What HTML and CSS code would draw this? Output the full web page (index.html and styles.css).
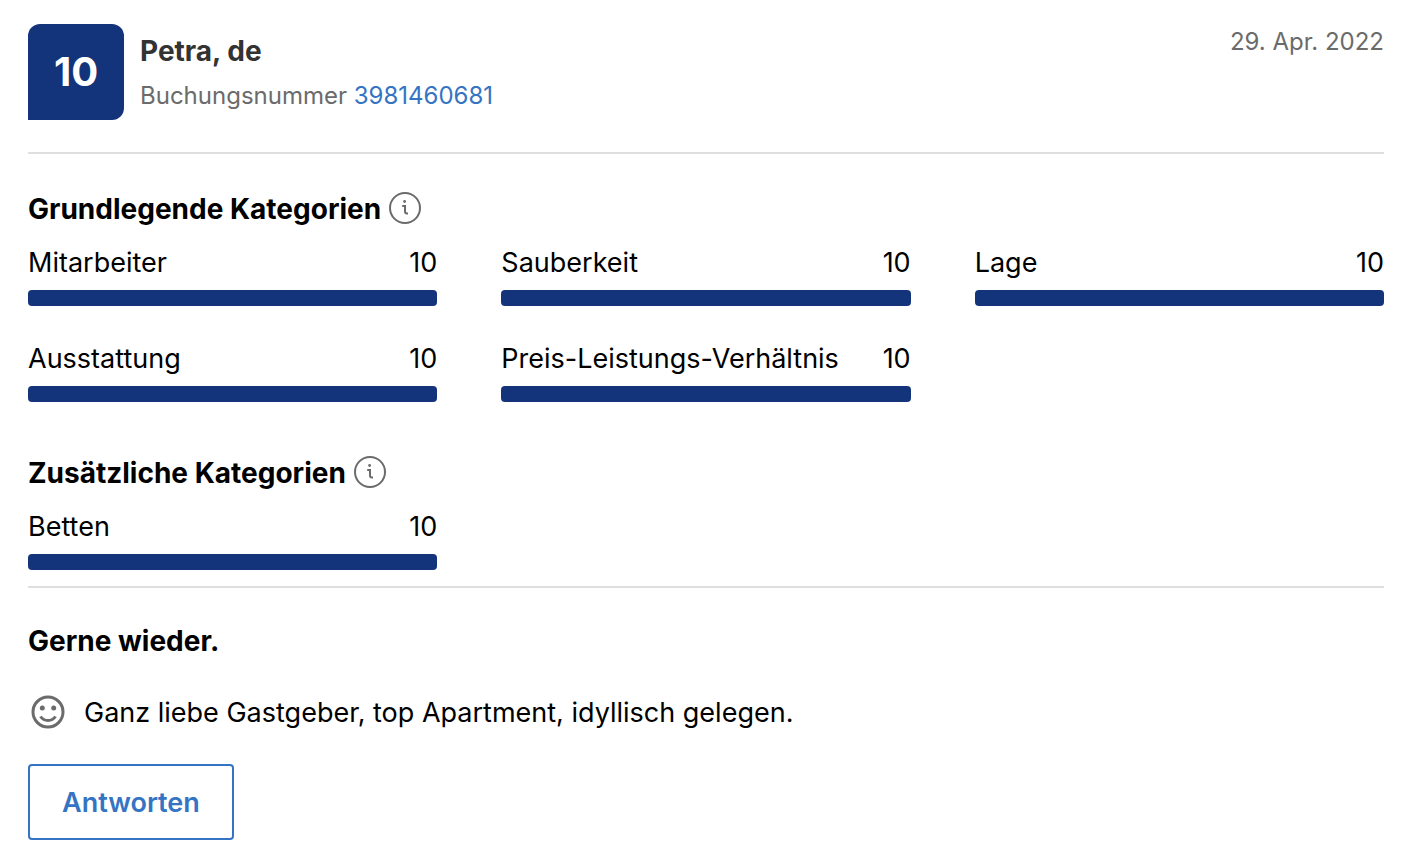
FILE: index.html
```html
<!DOCTYPE html>
<html lang="de">
<head>
	<meta charset="utf-8">
	<meta name="viewport" content="width=device-width, initial-scale=1">
	<title>Gästebewertung</title>
	<link rel="stylesheet" href="styles.css">
</head>
<body>

	<main class="review">

		<header class="review-header">
			<div class="score">10</div>
			<div class="guest">
				<h1 class="guest-name">Petra, de</h1>
				<p class="booking">Buchungsnummer <a href="#">3981460681</a></p>
			</div>
			<time class="date" datetime="2022-04-29">29. Apr. 2022</time>
		</header>

		<section class="ratings">
			<h2 class="title">Grundlegende Kategorien
				<svg class="info" viewBox="0 -4 32 40" aria-hidden="true">
					<circle cx="16" cy="16" r="15"/>
					<path d="M13.2 14h2.8v5.4q0 2 2 2h1"/>
					<circle class="dot" cx="15.6" cy="9.5" r="1.4"/>
				</svg>
			</h2>
			<div class="grid">
				<div class="category">
					<span>Mitarbeiter</span><span>10</span>
					<div class="bar"><div class="fill" style="width: 100%"></div></div>
				</div>
				<div class="category">
					<span>Sauberkeit</span><span>10</span>
					<div class="bar"><div class="fill" style="width: 100%"></div></div>
				</div>
				<div class="category">
					<span>Lage</span><span>10</span>
					<div class="bar"><div class="fill" style="width: 100%"></div></div>
				</div>
				<div class="category">
					<span>Ausstattung</span><span>10</span>
					<div class="bar"><div class="fill" style="width: 100%"></div></div>
				</div>
				<div class="category">
					<span>Preis-Leistungs-Verhältnis</span><span>10</span>
					<div class="bar"><div class="fill" style="width: 100%"></div></div>
				</div>
			</div>

			<h2 class="title">Zusätzliche Kategorien
				<svg class="info" viewBox="0 -4 32 40" aria-hidden="true">
					<circle cx="16" cy="16" r="15"/>
					<path d="M13.2 14h2.8v5.4q0 2 2 2h1"/>
					<circle class="dot" cx="15.6" cy="9.5" r="1.4"/>
				</svg>
			</h2>
			<div class="grid">
				<div class="category">
					<span>Betten</span><span>10</span>
					<div class="bar"><div class="fill" style="width: 100%"></div></div>
				</div>
			</div>
		</section>

		<section class="comment">
			<h2 class="title">Gerne wieder.</h2>
			<p class="text">
				<svg class="smile" viewBox="0 0 40 40" aria-hidden="true">
					<circle cx="20" cy="20" r="15"/>
					<path d="M12.5 24.5q2.8 4 7.5 4t7.5-4"/>
					<circle class="dot" cx="14.3" cy="16" r="2.5"/>
					<circle class="dot" cx="25.7" cy="16" r="2.5"/>
				</svg>
				Ganz liebe Gastgeber, top Apartment, idyllisch gelegen.
			</p>
			<button class="reply" type="button">Antworten</button>
		</section>

	</main>

</body>
</html>
```
FILE: styles.css
```css
body {
	margin: 0;
	background: #fff;
	color: #000;
	font-family: Inter, "Liberation Sans", sans-serif;
	font-size: 27px;
	line-height: 42px;
}

h1, h2, p {
	margin: 0;
}

.review {
	padding: 24px 32px 24px 28px;
}

/* header */

.review-header {
	display: flex;
	gap: 16px;
	padding-bottom: 32px;
	border-bottom: 2px solid #dfdfdf;
}

.score {
	width: 96px;
	height: 96px;
	border-radius: 12px 12px 12px 0;
	background: #13337a;
	color: #fff;
	font-size: 40px;
	font-weight: 700;
	line-height: 96px;
	text-align: center;
}

.guest {
	flex: 1;
	padding-top: 6px;
}

.guest-name {
	color: #333;
	font-size: 28px;
	font-weight: 700;
}

.booking {
	margin-top: 4px;
	color: #6b6b6b;
	font-size: 24px;
	line-height: 40px;
}

.booking a {
	color: #3574c3;
	text-decoration: none;
}

.date {
	color: #6b6b6b;
	font-size: 24px;
	line-height: 36px;
}

/* categories */

.ratings {
	padding: 34px 0 16px;
	border-bottom: 2px solid #dfdfdf;
}

.title {
	display: flex;
	align-items: flex-start;
	gap: 8px;
	font-size: 28px;
	font-weight: 700;
}

.info {
	width: 32px;
	height: 40px;
	fill: none;
	stroke: #6b6b6b;
	stroke-width: 2;
}

.info .dot,
.smile .dot {
	fill: #6b6b6b;
	stroke: none;
}

.grid {
	display: grid;
	grid-template-columns: repeat(3, 1fr);
	gap: 32px 64px;
	margin-top: 12px;
}

.grid + .title {
	margin-top: 50px;
}

.category {
	display: flex;
	flex-wrap: wrap;
	justify-content: space-between;
	row-gap: 6px;
}

.bar {
	width: 100%;
	height: 16px;
	border-radius: 4px;
	background: #e6e6e6;
	overflow: hidden;
}

.fill {
	height: 100%;
	background: #13337a;
}

/* comment */

.comment {
	padding-top: 32px;
}

.text {
	display: flex;
	align-items: flex-start;
	gap: 16px;
	margin: 30px 0;
}

.smile {
	width: 40px;
	height: 40px;
	fill: none;
	stroke: #6b6b6b;
	stroke-width: 3;
}

.reply {
	padding: 16px 32px 14px;
	border: 2px solid #3574c3;
	border-radius: 4px;
	background: #fff;
	color: #3574c3;
	font: 600 27px/42px Inter, "Liberation Sans", sans-serif;
	cursor: pointer;
}
```
